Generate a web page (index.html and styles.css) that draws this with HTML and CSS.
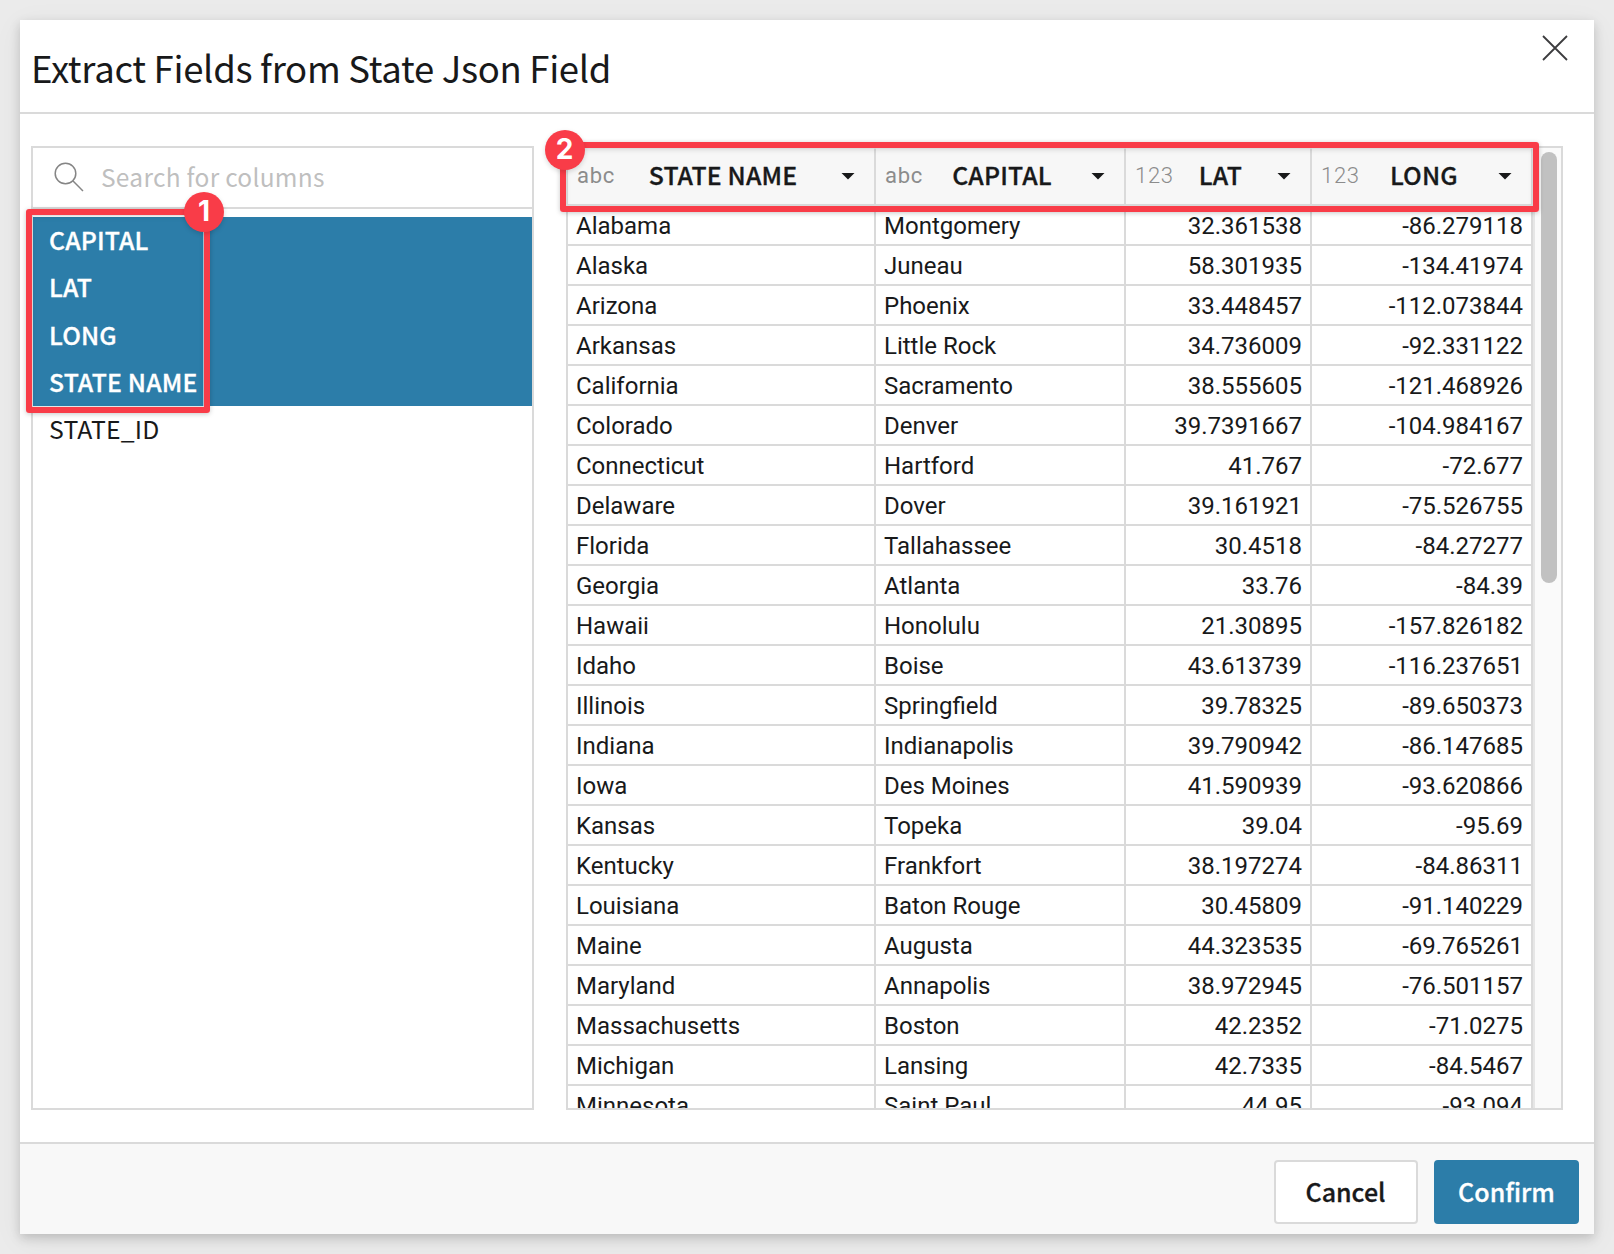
FILE: index.html
```html
<!DOCTYPE html>
<html lang="en">
<head>
<meta charset="utf-8">
<title>Extract Fields</title>
<link rel="stylesheet" href="styles.css">
</head>
<body>
<div class="modal">
  <header class="head">
    <h1 class="title">Extract Fields from State Json Field</h1>
    <svg class="close" width="26" height="26" viewBox="0 0 26 26"><path d="M1 1L25 25M25 1L1 25" stroke="#3c3c3e" stroke-width="1.8" fill="none"/></svg>
  </header>
  <main class="body">
    <section class="fields">
      <div class="search">
        <svg class="glass" width="30" height="30" viewBox="0 0 30 30"><g fill="none" stroke="#858585" stroke-width="1.5"><circle cx="11.5" cy="11.5" r="10.3"/><path d="M18.8 18.8L29 29"/></g></svg>
        <span class="placeholder">Search for columns</span>
      </div>
      <ul class="list">
        <li class="item selected">CAPITAL</li>
        <li class="item selected">LAT</li>
        <li class="item selected">LONG</li>
        <li class="item selected">STATE NAME</li>
        <li class="item">STATE_ID</li>
      </ul>
    </section>
    <section class="preview">
      <div class="grid">
        <div class="row header">
          <div class="th"><span class="type">abc</span><span class="name">STATE NAME</span><i class="caret"></i></div>
          <div class="th"><span class="type">abc</span><span class="name">CAPITAL</span><i class="caret"></i></div>
          <div class="th"><span class="type num">123</span><span class="name">LAT</span><i class="caret"></i></div>
          <div class="th"><span class="type num">123</span><span class="name">LONG</span><i class="caret"></i></div>
        </div>
        <div class="row"><span>Alabama</span><span>Montgomery</span><span>32.361538</span><span>-86.279118</span></div>
        <div class="row"><span>Alaska</span><span>Juneau</span><span>58.301935</span><span>-134.41974</span></div>
        <div class="row"><span>Arizona</span><span>Phoenix</span><span>33.448457</span><span>-112.073844</span></div>
        <div class="row"><span>Arkansas</span><span>Little Rock</span><span>34.736009</span><span>-92.331122</span></div>
        <div class="row"><span>California</span><span>Sacramento</span><span>38.555605</span><span>-121.468926</span></div>
        <div class="row"><span>Colorado</span><span>Denver</span><span>39.7391667</span><span>-104.984167</span></div>
        <div class="row"><span>Connecticut</span><span>Hartford</span><span>41.767</span><span>-72.677</span></div>
        <div class="row"><span>Delaware</span><span>Dover</span><span>39.161921</span><span>-75.526755</span></div>
        <div class="row"><span>Florida</span><span>Tallahassee</span><span>30.4518</span><span>-84.27277</span></div>
        <div class="row"><span>Georgia</span><span>Atlanta</span><span>33.76</span><span>-84.39</span></div>
        <div class="row"><span>Hawaii</span><span>Honolulu</span><span>21.30895</span><span>-157.826182</span></div>
        <div class="row"><span>Idaho</span><span>Boise</span><span>43.613739</span><span>-116.237651</span></div>
        <div class="row"><span>Illinois</span><span>Springfield</span><span>39.78325</span><span>-89.650373</span></div>
        <div class="row"><span>Indiana</span><span>Indianapolis</span><span>39.790942</span><span>-86.147685</span></div>
        <div class="row"><span>Iowa</span><span>Des Moines</span><span>41.590939</span><span>-93.620866</span></div>
        <div class="row"><span>Kansas</span><span>Topeka</span><span>39.04</span><span>-95.69</span></div>
        <div class="row"><span>Kentucky</span><span>Frankfort</span><span>38.197274</span><span>-84.86311</span></div>
        <div class="row"><span>Louisiana</span><span>Baton Rouge</span><span>30.45809</span><span>-91.140229</span></div>
        <div class="row"><span>Maine</span><span>Augusta</span><span>44.323535</span><span>-69.765261</span></div>
        <div class="row"><span>Maryland</span><span>Annapolis</span><span>38.972945</span><span>-76.501157</span></div>
        <div class="row"><span>Massachusetts</span><span>Boston</span><span>42.2352</span><span>-71.0275</span></div>
        <div class="row"><span>Michigan</span><span>Lansing</span><span>42.7335</span><span>-84.5467</span></div>
        <div class="row"><span>Minnesota</span><span>Saint Paul</span><span>44.95</span><span>-93.094</span></div>
      </div>
      <div class="track"><div class="thumb"></div></div>
    </section>
  </main>
  <footer class="foot">
    <button class="btn">Cancel</button>
    <button class="btn primary">Confirm</button>
  </footer>
</div>
<div class="callout callout-fields"></div>
<div class="badge badge-fields">1</div>
<div class="callout callout-headers"></div>
<div class="badge badge-headers">2</div>
</body>
</html>
```
FILE: styles.css
```css
* { box-sizing: border-box; }
body {
  margin: 0;
  width: 1614px;
  height: 1254px;
  padding: 20px;
  overflow: hidden;
  position: relative;
  background: #ebebeb;
  color: #18191a;
  font-family: "Noto Sans CJK SC", sans-serif;
}
.modal {
  width: 1574px;
  height: 1214px;
  display: flex;
  flex-direction: column;
  background: #fff;
  box-shadow: 0 4px 10px rgba(0,0,0,.17), 0 6px 28px rgba(0,0,0,.06);
}
.head {
  height: 94px;
  flex: none;
  display: flex;
  justify-content: space-between;
  align-items: flex-start;
  padding: 15px 26px 0 11px;
  border-bottom: 2px solid #dadada;
}
.title { margin: 0; font-size: 36.5px; font-weight: 400; line-height: 65px; letter-spacing: -.31px; white-space: nowrap; }
.close { display: block; }
.body { flex: 1; min-height: 0; display: flex; gap: 32px; padding: 32px 31px 32px 11px; }
.fields { width: 503px; border: 2px solid #dadada; }
.search { height: 61px; display: flex; align-items: center; padding: 0 0 2px 20.5px; gap: 17.5px; border-bottom: 2px solid #dadada; }
.placeholder { font-size: 24.5px; letter-spacing: .27px; line-height: 40px; color: #bfbfbf; white-space: nowrap; }
.list { list-style: none; margin: 0; padding: 8px 0 0; }
.item { height: 47.25px; line-height: 45px; padding-left: 16px; font-size: 24.8px; letter-spacing: .15px; white-space: nowrap; }
.selected { background: #2c7da9; color: #fff; font-weight: 500; -webkit-text-stroke: .3px currentColor; }
.preview { width: 997px; display: flex; border: 2px solid #dadada; overflow: hidden; }
.grid { width: 965px; font: 24px/36px Roboto, sans-serif; }
.row { display: grid; grid-template-columns: 308px 250px 186px 221px; grid-template-rows: 100%; height: 40px; }
.row > * { border-right: 2px solid #dadada; border-bottom: 2px solid #dadada; padding: 2px 8px 0; white-space: nowrap; }
.row > span:nth-child(n+3) { text-align: right; }
.header { height: 58px; background: #f7f7f7; }
.row > .th { display: flex; align-items: center; justify-content: space-between; padding: 0 19px 0 9px; }
.type { font-size: 22px; color: #8c8c8c; letter-spacing: .7px; }
.type.num { font-weight: 300; }
.name { font: 500 24.8px/40px "Noto Sans CJK SC", sans-serif; letter-spacing: .15px; -webkit-text-stroke: .3px currentColor; margin: -4px 0 0 -10px; }
.caret { width: 14px; height: 7px; background: #18191a; clip-path: polygon(0 0, 100% 0, 50% 100%); }
.track { flex: 1; background: #fafafa; border-left: 2px solid #e6e6e6; padding: 4px 4px 0 6px; }
.thumb { height: 431px; border-radius: 8px; background: #c1c1c1; }
.foot { height: 92px; flex: none; display: flex; justify-content: flex-end; gap: 16px; padding: 16px 15px 0; background: #f8f8f8; border-top: 2px solid #dadada; }
.btn { width: 144px; height: 64px; border: 2px solid #dadada; border-radius: 4px; background: #fff; color: #18191a; padding: 0 1px 2px 0; font: 500 25px/58px "Noto Sans CJK SC", sans-serif; -webkit-text-stroke: .3px currentColor; }
.primary { width: 145px; border-color: #2c7da9; background: #2c7da9; color: #fff; padding-right: 0; }
.callout { position: absolute; border: 6px solid #f93c48; border-radius: 3px; box-shadow: 0 1px 5px rgba(0,0,0,.22), inset 0 0 0 1px rgba(220,220,220,.7), inset 0 2px 5px rgba(0,0,0,.12); }
.callout-fields { left: 26px; top: 209px; width: 184px; height: 204px; }
.callout-headers { left: 560px; top: 142px; width: 979px; height: 70px; }
.badge { position: absolute; width: 40px; height: 40px; border-radius: 50%; background: #f93c48; color: #fff; text-align: center; font: 700 28px/40px Inter, sans-serif; box-shadow: 0 2px 5px rgba(0,0,0,.15); }
.badge-fields { left: 184px; top: 192px; line-height: 39px; }
.badge-headers { left: 544.5px; top: 129.5px; line-height: 39px; }
```
